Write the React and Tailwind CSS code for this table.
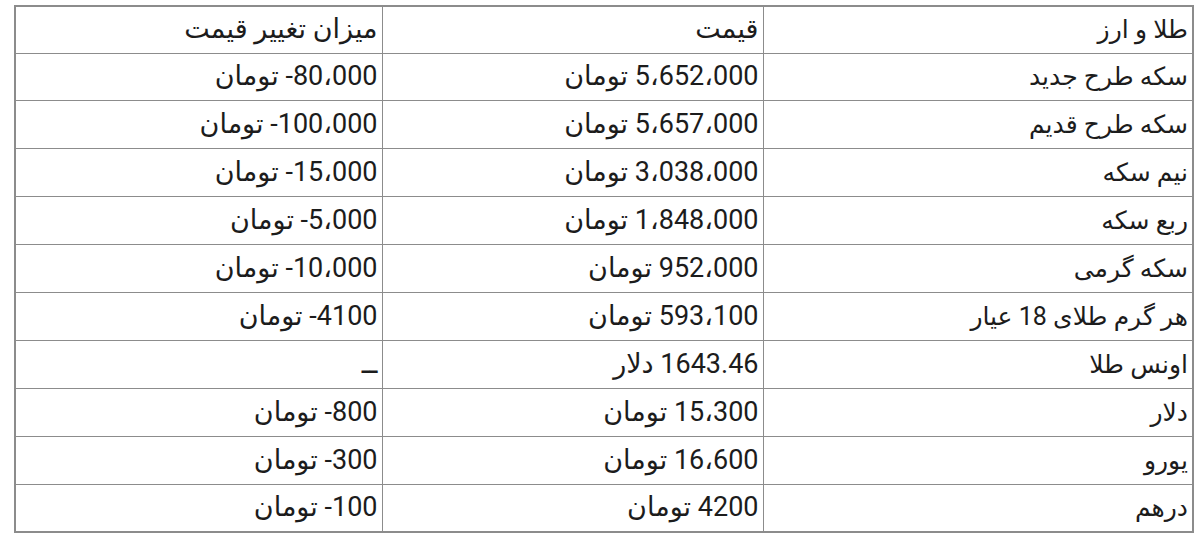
const rows = [
  ["سکه طرح جدید", "5،652،000 تومان", "80،000- تومان"],
  ["سکه طرح قدیم", "5،657،000 تومان", "100،000- تومان"],
  ["نیم سکه", "3،038،000 تومان", "15،000- تومان"],
  ["ربع سکه", "1،848،000 تومان", "5،000- تومان"],
  ["سکه گرمی", "952،000 تومان", "10،000- تومان"],
  ["هر گرم طلای 18 عیار", "593،100 تومان", "4100- تومان"],
  ["اونس طلا", "1643.46 دلار", "ــ"],
  ["دلار", "15،300 تومان", "800- تومان"],
  ["یورو", "16،600 تومان", "300- تومان"],
  ["درهم", "4200 تومان", "100- تومان"],
];

const cell = "border border-[#8c8c8c] pr-[4px] pl-2 text-right align-middle leading-none";
const nameCell = cell + " text-[25px]";
const valCell = cell + " text-[27px]";

const App = () => {
  return (
    <div className="w-[1200px] h-[543px] bg-white pt-[5px] pl-[14px]">
      <table
        dir="rtl"
        className="border-collapse border-2 border-[#8c8c8c] text-[#1c1c1c] w-[1178px] table-fixed"
        style={{ fontFamily: 'Roboto, "DejaVu Sans", sans-serif' }}
      >
        <colgroup>
          <col className="w-[430px]" />
          <col className="w-[381px]" />
          <col className="w-[367px]" />
        </colgroup>
        <tbody>
          <tr className="h-[47px]">
            <td className={nameCell}>طلا و ارز</td>
            <td className={valCell}>قیمت</td>
            <td className={valCell}>میزان تغییر قیمت</td>
          </tr>
          {rows.map((r, i) => (
            <tr key={i} className="h-[47.9px]">
              <td className={nameCell}>{r[0]}</td>
              <td className={valCell}>{r[1]}</td>
              <td className={valCell}>{r[2]}</td>
            </tr>
          ))}
        </tbody>
      </table>
    </div>
  );
};

export default App;
